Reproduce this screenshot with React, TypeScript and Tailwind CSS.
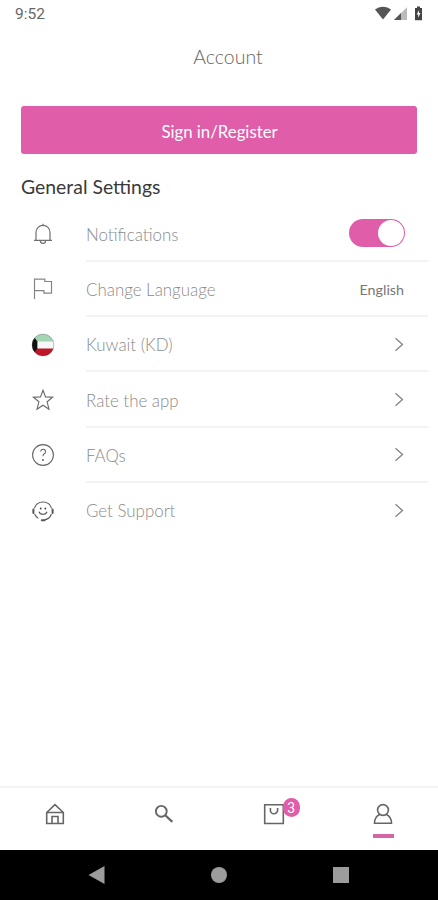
import type { ReactNode } from "react";

function BellIcon() {
  return (
    <svg width="24" height="24" viewBox="0 0 24 24" fill="none" stroke="#707070" strokeWidth="1.2">
      <path d="M5 18V10.3a7 7 0 0 1 14 0V18" />
      <path d="M3 18.4h18M12 3.4V1.8M9.4 18.8a2.6 2.6 0 0 0 5.2 0" />
    </svg>
  );
}

function FlagIcon() {
  return (
    <svg width="24" height="24" viewBox="0 0 24 24" fill="none" stroke="#858585" strokeWidth="1.2">
      <path d="M3.5 22V2.2h10.300v2.300h6.700v11.600h-7.600v-2.400H3.500" />
    </svg>
  );
}

function KuwaitFlag() {
  return (
    <svg width="24" height="24" viewBox="0 0 24 24">
      <defs>
        <clipPath id="flag">
          <circle cx="12" cy="12" r="11" />
        </clipPath>
      </defs>
      <g clipPath="url(#flag)">
        <path fill="#f7f8f7" d="M0 0h24v24H0z" />
        <path fill="#a4d5b5" d="M0 0h24v8.400H0z" />
        <path fill="#bd1729" d="M0 15.400h24V24H0z" />
        <path fill="#111" d="M0 0l6.400 8.400v7L0 24z" />
      </g>
      <circle cx="12" cy="12" r="10.900" fill="none" stroke="#555" strokeOpacity=".5" strokeWidth=".7" />
    </svg>
  );
}

function StarIcon() {
  return (
    <svg width="24" height="24" viewBox="0 0 24 24" fill="none" stroke="#666" strokeWidth="1.1">
      <path d="M12 2.200l2.500 6.700 7.100.4-5.500 4.500 1.900 7.400-6-4-6 4 1.900-7.400-5.500-4.500 7.100-.4z" />
    </svg>
  );
}

function HelpIcon() {
  return (
    <svg width="24" height="24" viewBox="0 0 24 24" fill="none" stroke="#666" strokeWidth="1.1">
      <circle cx="12" cy="12" r="10.400" />
      <path d="M9.700 8.500a2.400 2.400 0 1 1 3.600 2.200c-.9.6-1.300 1.100-1.300 2.500" />
      <circle cx="12" cy="17" r=".9" fill="#555" stroke="none" />
    </svg>
  );
}

function SupportIcon() {
  return (
    <svg width="24" height="24" viewBox="0 0 24 24" fill="none" stroke="#555" strokeWidth="1.1">
      <path d="M3.400 9.400a9 9 0 0 1 17.200 0M3.600 15a9 9 0 0 0 3.800 4.400M20.400 15a9 9 0 0 1-6.800 5.900" />
      <path d="M8 12.700c1.200 3.400 6.800 3.400 8 0" />
      <path d="M2.400 10.500v3.400M21.600 10.500v3.400" strokeWidth="2" strokeLinecap="round" />
      <path d="M10.800 21.200h2.700" strokeWidth="2" strokeLinecap="round" />
      <circle cx="9.700" cy="9.500" r=".9" fill="#444" stroke="none" />
      <circle cx="14.300" cy="9.500" r=".9" fill="#444" stroke="none" />
    </svg>
  );
}

function Chevron() {
  return (
    <svg width="10" height="16" viewBox="0 0 10 16" fill="none" stroke="#858585" strokeWidth="1.3">
      <path d="M.5 2.300l7 6.200-7 6.200" />
    </svg>
  );
}

function Toggle() {
  return (
    <div className="flex h-7 w-14 justify-end rounded-full bg-[#e05da9] p-px">
      <div className="size-[26px] rounded-full bg-white" />
    </div>
  );
}

type RowProps = { icon: ReactNode; label: string; last?: boolean; children: ReactNode };

function Row({ icon, label, last, children }: RowProps) {
  return (
    <div className="flex h-[55.3px] pl-[31px] pr-[10px]">
      <div className="flex w-[55px] items-center">{icon}</div>
      <div
        className={
          last
            ? "flex flex-1 items-center justify-between pb-[2px] pr-[23px]"
            : "flex flex-1 items-center justify-between border-b-2 border-[#f3f3f3] pr-[23px]"
        }
      >
        <span className="pt-[3px] text-[16.9px] font-light text-[#8b8b8b]">{label}</span>
        {children}
      </div>
    </div>
  );
}

export default function App() {
  return (
    <div className="flex h-[900px] w-[438px] flex-col overflow-hidden bg-white font-['Lato',sans-serif]">
      {/* Status bar */}
      <div className="flex h-7 items-center justify-between pl-[15px] pr-[15px]">
        <span className="pt-[2px] font-['Roboto',sans-serif] text-[15.5px] text-[#666]">9:52</span>
        <svg width="48" height="16" viewBox="0 0 48 16">
          <path fill="#555" d="M0 3.600C4.500-.3 11.500-.3 16 3.600L8 13.500z" />
          <path fill="#bbb" d="M19 14L32 1.200V14z" />
          <path fill="#555" d="M19 14l7-6.900V14z" />
          <path fill="#444" d="M42 .5h3V2h2v12.300h-7V2h2z" />
          <path fill="#fff" d="M44.100 4l-2.400 4.400h1.500v3.300l2.300-4.600H44z" />
        </svg>
      </div>

      {/* Title */}
      <h1 className="flex h-[58px] items-center justify-center pl-[18px] text-[19.5px] font-light text-[#666]">
        Account
      </h1>

      <button className="mx-[21px] mt-5 h-12 shrink-0 rounded-[3px] bg-[#e05da9] pt-[3px] pl-px text-[16.8px] text-white">
        Sign in/Register
      </button>

      <h2 className="mt-[19px] px-[21px] text-[19.4px] leading-7 text-[#3a3a3a]">General Settings</h2>

      {/* Settings */}
      <div className="mt-[5.4px]">
        <Row icon={<BellIcon />} label="Notifications">
          <Toggle />
        </Row>
        <Row icon={<FlagIcon />} label="Change Language">
          <span className="pt-[3px] pr-px text-[14.3px] text-[#777]">English</span>
        </Row>
        <Row icon={<KuwaitFlag />} label="Kuwait (KD)">
          <Chevron />
        </Row>
        <Row icon={<StarIcon />} label="Rate the app">
          <Chevron />
        </Row>
        <Row icon={<HelpIcon />} label="FAQs">
          <Chevron />
        </Row>
        <Row icon={<SupportIcon />} label="Get Support" last>
          <Chevron />
        </Row>
      </div>

      {/* Tab bar */}
      <div className="mt-auto grid h-[64px] shrink-0 grid-cols-4 border-t-2 border-[#f3f3f3]">
        <div className="flex justify-center pt-[14px]">
          <svg width="24" height="24" viewBox="0 0 24 24" fill="none" stroke="#666" strokeWidth="1.6">
            <path d="M3.700 10.500h16.600v11H3.700zM4.200 10L12 2.700l7.800 7.300M9 21.500v-7h6v7" />
          </svg>
        </div>
        <div className="flex justify-center pt-[14px]">
          <svg width="24" height="24" viewBox="0 0 24 24" fill="none" stroke="#666" strokeWidth="1.900">
            <circle cx="9.300" cy="9.300" r="5.400" />
            <path d="M13.300 13.300l7 6.600" strokeWidth="2.200" />
          </svg>
        </div>
        <div className="flex justify-center pt-[14px]">
          <div className="relative size-6">
            <svg width="24" height="24" viewBox="0 0 24 24" fill="none" stroke="#666" strokeWidth="1.600">
              <path d="M2.700 2.700h18.600v18.800H2.700zM8.400 6v2.200a3.600 3.600 0 0 0 7.200 0V6" />
            </svg>
            <span className="absolute -top-[4px] left-[21px] flex h-[19px] w-[17px] items-center justify-center rounded-full bg-[#e05da9] pt-px font-['Roboto',sans-serif] text-[14px] text-white">
              3
            </span>
          </div>
        </div>
        <div className="flex flex-col items-center pt-[14px]">
          <svg width="24" height="24" viewBox="0 0 24 24" fill="none" stroke="#666" strokeWidth="1.600">
            <circle cx="12" cy="8" r="5.400" />
            <path d="M8.700 12.500c-3.300 1.500-5.200 4.500-5.200 8.700h17c0-4.200-1.900-7.200-5.200-8.700" />
          </svg>
          <div className="mt-[8px] h-[4px] w-[21px] bg-[#d565a5]" />
        </div>
      </div>

      {/* System navigation */}
      <div className="flex h-[50px] shrink-0 items-center justify-between bg-black pl-[88px] pr-[89px]">
        <svg width="17" height="20" viewBox="0 0 17 20">
          <path fill="#9c9c9c" d="M.5 10L16.500 1v18z" />
        </svg>
        <div className="size-4 rounded-full bg-[#9c9c9c]" />
        <div className="size-4 bg-[#9c9c9c]" />
      </div>
    </div>
  );
}
